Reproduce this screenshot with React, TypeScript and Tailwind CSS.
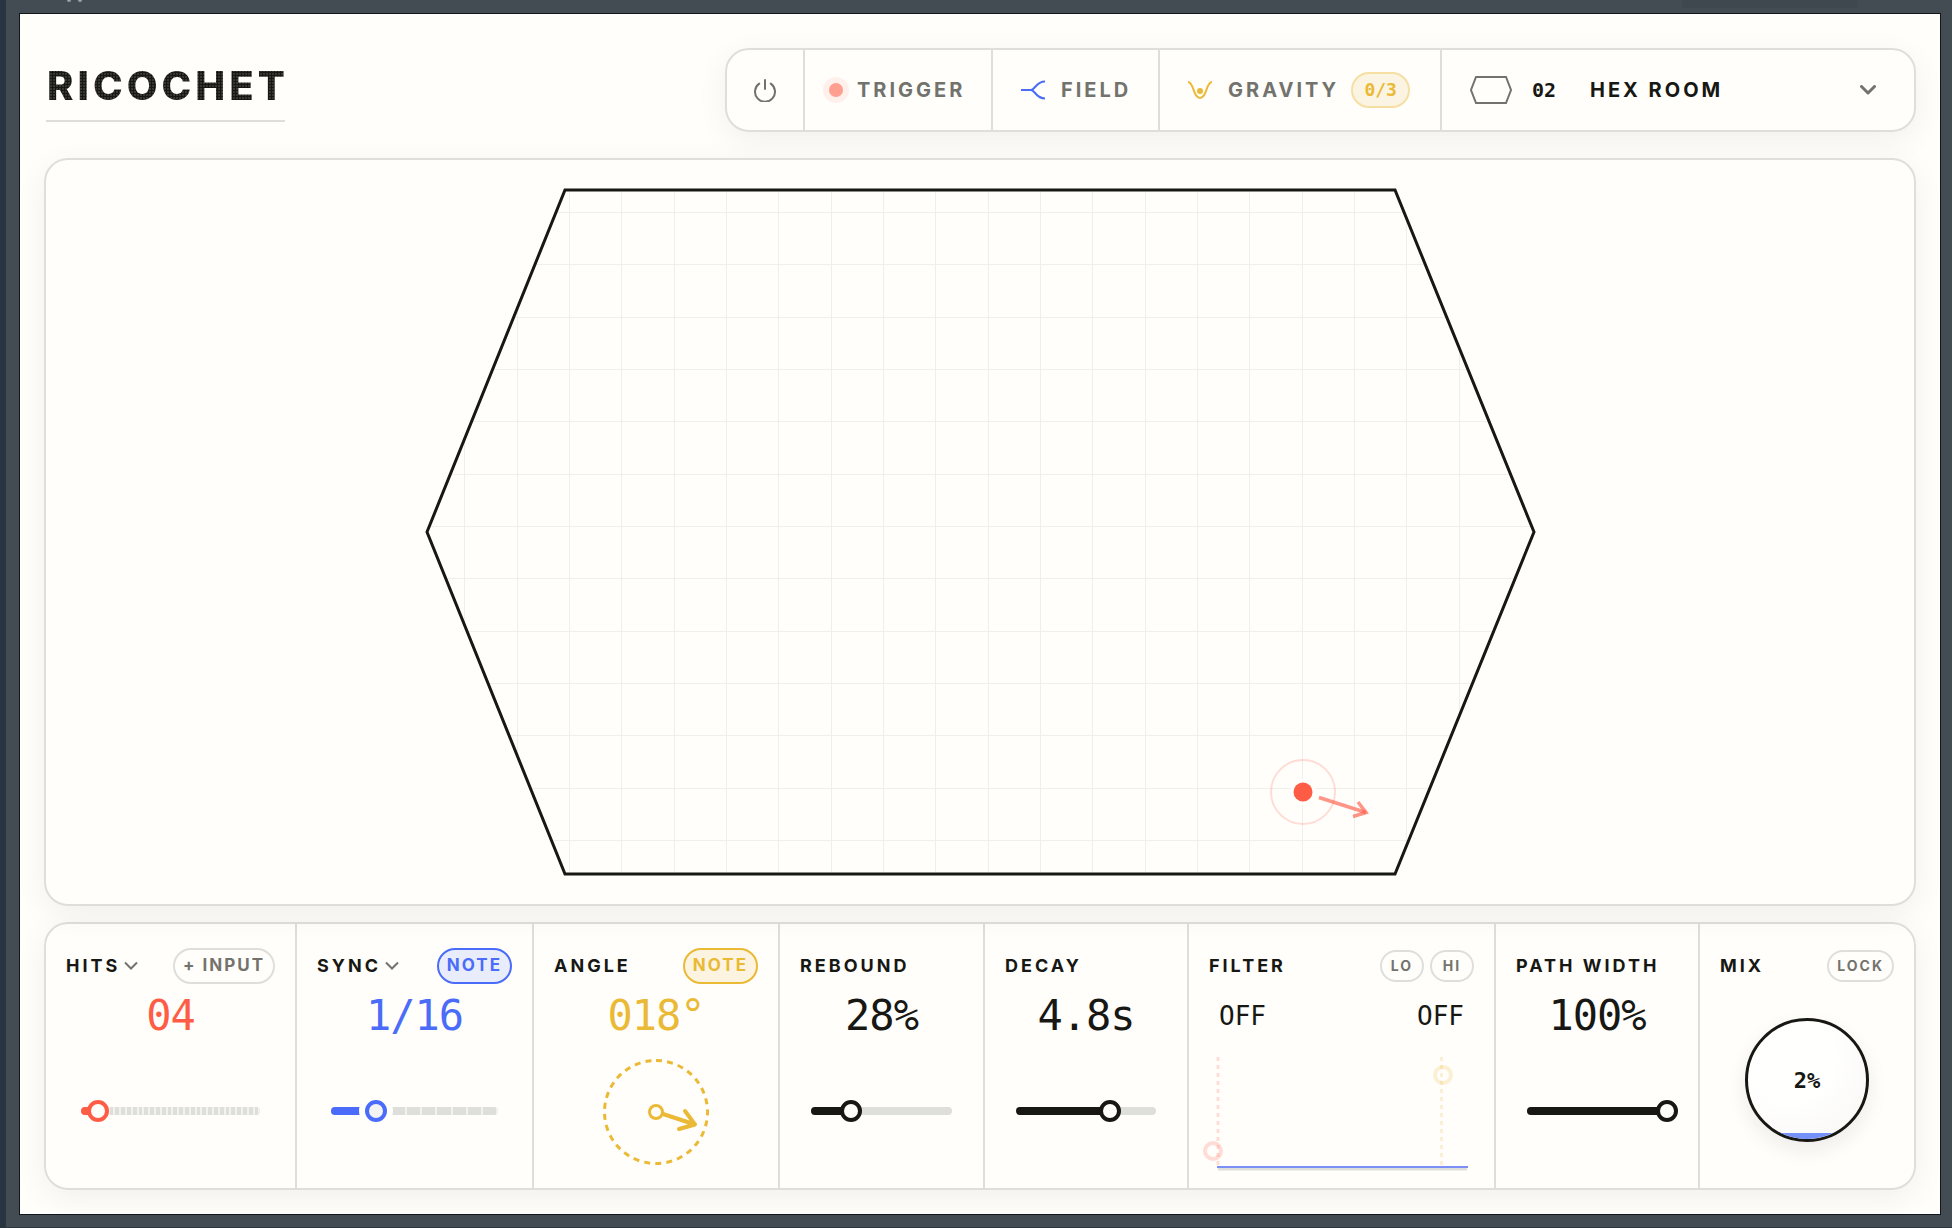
import React, { useState } from 'react';
import clsx from 'clsx';

type Tone = 'ink' | 'coral' | 'blue' | 'amber';

const thumbBorder: Record<Tone, string> = {
  ink: '[&::-webkit-slider-thumb]:border-[#171714]',
  coral: '[&::-webkit-slider-thumb]:border-[#ff5c46]',
  blue: '[&::-webkit-slider-thumb]:border-[#4a6cf9]',
  amber: '[&::-webkit-slider-thumb]:border-[#eab935]',
};

const fillColor: Record<Tone, string> = {
  ink: 'bg-[#171714]',
  coral: 'bg-[#ff5c46]',
  blue: 'bg-[#4a6cf9]',
  amber: 'bg-[#eab935]',
};

const textColor: Record<Tone, string> = {
  ink: 'text-[#171714]',
  coral: 'text-[#ff5c46]',
  blue: 'text-[#4a6cf9]',
  amber: 'text-[#eab935]',
};

const pillColor = {
  plain: 'border-[#dededb] text-[#73736e]',
  blue: 'border-[#4a6cf9] bg-[#e9ecfb] text-[#4a6cf9]',
  amber: 'border-[#eab935] bg-[#fcf4e0] text-[#eab935]',
};

const mono = "font-['DejaVu_Sans_Mono',monospace]";

interface SliderProps {
  label: string;
  tone?: Tone;
  max: number;
  initial: number;
  ticks?: boolean;
  halo?: boolean;
}

const Slider: React.FC<SliderProps> = ({ label, tone = 'ink', max, initial, ticks, halo }) => {
  const [value, setValue] = useState(initial);

  return (
    <div className="relative mx-[7%] h-6">
      <div className="absolute inset-x-0 top-2 flex h-2 overflow-hidden rounded-full bg-[#dededb]">
        {ticks &&
          Array.from({ length: max }, (_, i) => (
            <span key={i} className="h-full flex-1 border-r-2 border-[#f2f2ef]" />
          ))}
      </div>
      <div
        className={clsx('absolute left-0 top-2 h-2 rounded-full', fillColor[tone])}
        style={{ width: `${(value / max) * 100}%` }}
      />
      <input
        type="range"
        aria-label={label}
        min={0}
        max={max}
        value={value}
        onChange={(e) => setValue(Number(e.target.value))}
        className={clsx(
          'absolute -left-[11px] top-0 h-6 w-[calc(100%+22px)] cursor-pointer appearance-none bg-transparent outline-none',
          '[&::-webkit-slider-thumb]:size-[22px] [&::-webkit-slider-thumb]:appearance-none [&::-webkit-slider-thumb]:rounded-full [&::-webkit-slider-thumb]:border-4',
          thumbBorder[tone],
          halo
            ? '[&::-webkit-slider-thumb]:bg-[#f4f3f3] [&::-webkit-slider-thumb]:shadow-[0_0_0_6px_#fffefb]'
            : '[&::-webkit-slider-thumb]:bg-[#fffefb]'
        )}
      />
    </div>
  );
};

const Pill: React.FC<{ tone?: keyof typeof pillColor; small?: boolean; children: React.ReactNode }> = ({
  tone = 'plain',
  small,
  children,
}) => (
  <button
    type="button"
    className={clsx(
      'flex shrink-0 items-center justify-center whitespace-nowrap rounded-full border-2 font-bold tracking-[2px]',
      small ? 'h-8 min-w-11 px-2 text-sm' : 'h-9 px-2 text-[17px]',
      pillColor[tone]
    )}
  >
    {children}
  </button>
);

const MenuChevron: React.FC = () => (
  <svg className="-ml-1 h-2.5 w-3.5" viewBox="0 0 14 10" fill="none" stroke="#73736e" strokeWidth="2">
    <path d="M1 1.5 L7 7.5 L13 1.5" />
  </svg>
);

interface ControlProps {
  title: string;
  value?: string;
  tone?: Tone;
  menu?: boolean;
  actions?: React.ReactNode;
  children: React.ReactNode;
}

const Control: React.FC<ControlProps> = ({ title, value, tone = 'ink', menu, actions, children }) => (
  <section className="flex min-w-0 flex-col border-r-2 border-[#dededb] px-5 pt-6 last:border-r-0">
    <div className="flex h-9 items-center justify-between">
      <h2 className="text-lg font-bold tracking-[3px] whitespace-nowrap">
        {menu ? (
          <button type="button" className="flex items-center gap-2">
            {title}
            <MenuChevron />
          </button>
        ) : (
          title
        )}
      </h2>
      <div className="flex gap-1.5">{actions}</div>
    </div>
    {value && (
      <output className={clsx('mt-2 block h-12 text-center text-[42px] leading-[48px] tracking-[-1px]', mono, textColor[tone])}>
        {value}
      </output>
    )}
    {children}
  </section>
);

const SliderBody: React.FC<SliderProps> = (props) => (
  <div className="flex flex-1 flex-col justify-center pb-1.5">
    <Slider {...props} />
  </div>
);

const AngleDial: React.FC = () => (
  <div className="flex flex-1 items-center justify-center pb-1">
    <svg className="size-[106px]" viewBox="0 0 106 106" fill="none" stroke="#eab935">
      <circle cx="53" cy="53" r="51.5" strokeWidth="3" strokeDasharray="6 5.16" transform="rotate(-90 53 53)" />
      <circle cx="53" cy="53" r="6.5" strokeWidth="3" />
      <path d="M60 55 L92 65.5 M82 52 L92 65.5 L76 70" strokeWidth="4" strokeLinecap="round" strokeLinejoin="round" />
    </svg>
  </div>
);

const FilterGraph: React.FC = () => (
  <svg className="w-full overflow-visible" viewBox="0 0 265 142" fill="none">
    <path d="M9 17 V126" stroke="#ff5c46" strokeOpacity="0.2" strokeWidth="3" strokeDasharray="4 4" />
    <path d="M232.5 17 V126" stroke="#eab935" strokeOpacity="0.24" strokeWidth="2.5" strokeDasharray="4 4" />
    <path d="M9 129 H258" stroke="#dededb" strokeWidth="3" />
    <path d="M8 127 H259" stroke="#7b90f6" strokeWidth="2" />
    <circle cx="4" cy="111" r="8" stroke="#ff5c46" strokeOpacity="0.2" strokeWidth="4" />
    <circle cx="234" cy="35" r="8" stroke="#eab935" strokeOpacity="0.2" strokeWidth="4" />
  </svg>
);

const gridColumns = Array.from({ length: 21 }, (_, i) => 366.5 + i * 52.333);
const gridRows = Array.from({ length: 13 }, (_, i) => 52.5 + i * 52.333);
const room = '519,30 1349,30 1488,372 1349,714 519,714 381,372';

const Stage: React.FC = () => (
  <svg className="h-0 w-full grow" viewBox="0 0 1868 744" fill="none">
    <defs>
      <clipPath id="room">
        <polygon points={room} />
      </clipPath>
    </defs>
    <g clipPath="url(#room)" stroke="#efefec">
      {gridColumns.map((x) => (
        <line key={x} x1={Math.floor(x) + 0.5} x2={Math.floor(x) + 0.5} y1="30" y2="714" />
      ))}
      {gridRows.map((y) => (
        <line key={y} x1="381" x2="1488" y1={Math.floor(y) + 0.5} y2={Math.floor(y) + 0.5} />
      ))}
    </g>
    <polygon points={room} stroke="#171714" strokeWidth="3" />
    {/* Ball and launch direction */}
    <circle cx="1257" cy="632" r="32" stroke="#ff5c46" strokeOpacity="0.2" strokeWidth="2" />
    <circle cx="1257" cy="632" r="13" fill="#fffefb" />
    <circle cx="1257" cy="632" r="9.5" fill="#ff5c46" />
    <g stroke="#ff5c46" strokeOpacity="0.65" strokeWidth="3.5">
      <path d="M1273 637.5 L1320 652.5" />
      <path d="M1312 642 L1320 652.5 L1307 656.5" />
    </g>
  </svg>
);

const toolButton =
  'flex shrink-0 items-center border-r-2 border-[#dededb] text-xl font-bold tracking-[3px] text-[#73736e]';

const Toolbar: React.FC = () => (
  <nav className="flex h-[84px] overflow-hidden rounded-3xl border-2 border-[#dededb] bg-[#fffefb] shadow-[0_8px_32px_rgba(20,20,10,0.06)]">
    <button type="button" aria-label="Power" className={clsx(toolButton, 'w-[78px] justify-center')}>
      <svg className="size-6" viewBox="0 0 24 24" fill="none" stroke="#73736e" strokeWidth="2" strokeLinecap="round">
        <path d="M12 2 V11" />
        <path d="M6.2 5.6 A10 10 0 1 0 17.8 5.6" />
      </svg>
    </button>
    <button type="button" className={clsx(toolButton, 'w-[188px] gap-3.5 pl-6')}>
      <span className="size-3.5 rounded-full bg-[#ff9f90] shadow-[0_0_0_6px_#fff0ec]" />
      TRIGGER
    </button>
    <button type="button" className={clsx(toolButton, 'w-[167px] gap-4 pl-7')}>
      <svg className="size-6" viewBox="0 0 24 24" fill="none" stroke="#4a6cf9" strokeWidth="2">
        <path d="M0 12 H10 C14 12 15 3.5 24 3.5" />
        <path d="M10 12 C14 12 15 20.5 24 20.5" />
      </svg>
      FIELD
    </button>
    <button type="button" className={clsx(toolButton, 'w-[282px] gap-4 pl-7')}>
      <svg className="size-6" viewBox="0 0 24 24" fill="none" stroke="#eab935" strokeWidth="2">
        <path d="M0 4 C6 4 5 20 12 20 C19 20 18 4 24 4" />
        <circle cx="12" cy="13" r="3" fill="#eab935" stroke="none" />
      </svg>
      GRAVITY
      <span
        className={clsx(
          '-ml-1 flex h-9 w-[59px] items-center justify-center rounded-full border-2 border-[#f6dfa3] bg-[#fcf4e3] text-lg tracking-normal text-[#eab935]',
          mono
        )}
      >
        0/3
      </span>
    </button>
    <label className="flex w-[472px] items-center pl-7 text-xl font-bold">
      <svg className="h-7 w-[42px]" viewBox="0 0 42 28" fill="none" stroke="#73736e" strokeWidth="2">
        <polygon points="6,1 36,1 41,14 36,27 6,27 1,14" />
      </svg>
      <span className={clsx('ml-5 w-[58px]', mono)}>02</span>
      <select
        aria-label="Room"
        className="min-w-0 flex-1 cursor-pointer appearance-none bg-transparent font-bold tracking-[3px] outline-none"
      >
        <option>HEX ROOM</option>
      </select>
      <svg
        className="pointer-events-none mr-[38px] h-2.5 w-4"
        viewBox="0 0 16 10"
        fill="none"
        stroke="#73736e"
        strokeWidth="3"
        strokeLinecap="round"
        strokeLinejoin="round"
      >
        <path d="M1.5 1.5 L8 8 L14.5 1.5" />
      </svg>
    </label>
  </nav>
);

const App: React.FC = () => {
  return (
    <div className="relative flex min-h-screen flex-col border-b border-l-[6px] border-b-[#2c363c] border-l-[#283540] bg-[#424c52] pt-[13px] pr-[11px] pb-3 pl-[13px] font-['Inter',sans-serif] text-[#171714]">
      {/* Host window title remains */}
      <span className="absolute top-0 left-[61px] h-0.5 w-1 rounded-b-full bg-[#9ba2a6]" />
      <span className="absolute top-0 left-[72px] h-0.5 w-1 rounded-b-full bg-[#9ba2a6]" />
      <span className="absolute top-0 right-[94px] h-2 w-44 rounded-b bg-[#3e484e]" />

      <main className="flex flex-1 flex-col border border-[#10181c] bg-[#fffefb] px-6 pb-6">
        <header className="flex items-start justify-between pt-[34px]">
          <h1 className="ml-0.5 h-[74px] w-[239px] border-b-2 border-[#dededb] pt-3 pl-px text-[40px] leading-[52px] font-extrabold">
            <span className="bg-[radial-gradient(circle_at_1px_1px,#42423e_0.6px,#171714_1px)] bg-[length:3px_3px] bg-clip-text tracking-[4px] text-transparent">
              RICOCHET
            </span>
          </h1>
          <Toolbar />
        </header>

        <div className="relative mt-[26px] flex min-h-[400px] flex-1 flex-col rounded-3xl border-2 border-[#dededb] bg-[#fffefb] shadow-[0_8px_32px_rgba(20,20,10,0.06)]">
          <Stage />
        </div>

        {/* Controls */}
        <div className="mt-4 grid h-[268px] grid-cols-[251fr_237fr_246fr_205fr_204fr_307fr_204fr_214fr] rounded-3xl border-2 border-[#dededb] shadow-[0_8px_32px_rgba(20,20,10,0.06)]">
          <Control title="HITS" value="04" tone="coral" menu actions={<Pill>+ INPUT</Pill>}>
            <SliderBody label="Hits" tone="coral" max={31} initial={3} ticks />
          </Control>
          <Control title="SYNC" value="1/16" tone="blue" menu actions={<Pill tone="blue">NOTE</Pill>}>
            <SliderBody label="Sync" tone="blue" max={11} initial={3} ticks halo />
          </Control>
          <Control title="ANGLE" value="018°" tone="amber" actions={<Pill tone="amber">NOTE</Pill>}>
            <AngleDial />
          </Control>
          <Control title="REBOUND" value="28%">
            <SliderBody label="Rebound" max={100} initial={28} />
          </Control>
          <Control title="DECAY" value="4.8s">
            <SliderBody label="Decay" max={100} initial={67} />
          </Control>
          <Control
            title="FILTER"
            actions={
              <>
                <Pill small>LO</Pill>
                <Pill small>HI</Pill>
              </>
            }
          >
            <div className={clsx('mt-2 flex h-12 items-center justify-between px-2.5 text-[26px]', mono)}>
              <output>OFF</output>
              <output>OFF</output>
            </div>
            <FilterGraph />
          </Control>
          <Control title="PATH WIDTH" value="100%">
            <SliderBody label="Path width" max={100} initial={100} />
          </Control>
          <Control title="MIX" actions={<Pill small>LOCK</Pill>}>
            <div className="relative mt-[34px] flex size-[124px] items-center justify-center self-center overflow-hidden rounded-full border-[3px] border-[#171714] bg-[radial-gradient(circle_at_35%_30%,#fffffe_40%,#f7f6f3_100%)] shadow-[0_8px_20px_rgba(20,20,10,0.08)]">
              <div className="absolute inset-x-0 bottom-0 h-1.5 bg-[#7590f8]" />
              <output className={clsx('text-[22px] font-bold', mono)}>2%</output>
            </div>
          </Control>
        </div>
      </main>
    </div>
  );
};

export default App;
